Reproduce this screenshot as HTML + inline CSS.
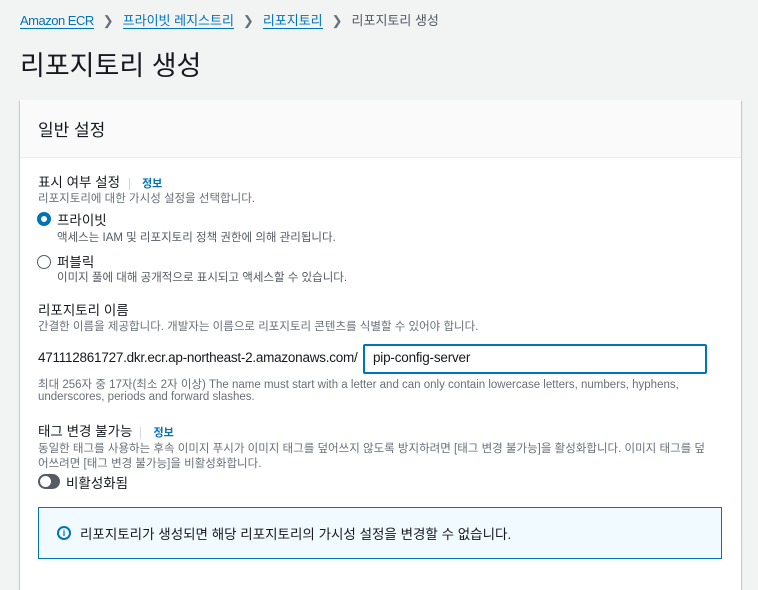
<!DOCTYPE html>
<html><head><meta charset="utf-8"><style>
*{margin:0;padding:0;box-sizing:border-box}
body{width:758px;height:578px;background:#f2f3f3;font-family:"Liberation Sans","Noto Sans CJK KR",sans-serif;color:#16191f;position:relative;overflow:hidden}
.a{position:absolute;white-space:nowrap}
.bc{font-size:13px;top:10px;left:20px;color:#545b64}
.bc a{color:#0073bb;text-decoration:none;border-bottom:1px solid #0073bb}
.sep{display:inline-block;margin:0 9px;color:#687078}
h1{position:absolute;left:20px;top:44px;font-size:27px;font-weight:400}
.card{position:absolute;left:20px;top:100px;width:721px;height:490px;background:#fff;box-shadow:0 1px 1px rgba(0,28,36,.3),1px 1px 1px rgba(0,28,36,.15),-1px 1px 1px rgba(0,28,36,.15)}
.hd{height:58px;background:#fafafa;border-bottom:1px solid #eaeded;padding:16px 18px;font-size:17px}
.lab{font-size:13.5px}
.d{font-size:11.5px;color:#687078}
.info{color:#0073bb;font-size:11px;font-weight:bold;border-left:1px solid #d5dbdb;padding-left:12px;margin-left:8px}
.radio{position:absolute;width:14px;height:14px;border-radius:50%}
</style></head><body>
<div class="a bc"><a style="letter-spacing:-0.5px">Amazon ECR</a><span class="sep">&#x276F;</span><a>프라이빗 레지스트리</a><span class="sep">&#x276F;</span><a>리포지토리</a><span class="sep">&#x276F;</span>리포지토리 생성</div>
<h1>리포지토리 생성</h1>
<div class="card"><div class="hd">일반 설정</div></div>
<div class="a lab" style="left:38px;top:171px">표시 여부 설정<span class="info" style="margin-left:9px">정보</span></div>
<div class="a d" style="left:38px;top:190px">리포지토리에 대한 가시성 설정을 선택합니다.</div>
<div class="radio" style="left:37px;top:212px;border:4px solid #0073bb"></div>
<div class="a lab" style="left:57px;top:209px">프라이빗</div>
<div class="a d" style="left:57px;top:229px;color:#545b64">액세스는 IAM 및 리포지토리 정책 권한에 의해 관리됩니다.</div>
<div class="radio" style="left:37px;top:255px;border:1.5px solid #545b64"></div>
<div class="a lab" style="left:57px;top:251px">퍼블릭</div>
<div class="a d" style="left:57px;top:269px;color:#545b64">이미지 풀에 대해 공개적으로 표시되고 액세스할 수 있습니다.</div>
<div class="a lab" style="left:38px;top:299px">리포지토리 이름</div>
<div class="a d" style="left:38px;top:318px">간결한 이름을 제공합니다. 개발자는 이름으로 리포지토리 콘텐츠를 식별할 수 있어야 합니다.</div>
<div class="a" style="left:38px;top:350px;font-size:13.5px;letter-spacing:-0.25px">471112861727.dkr.ecr.ap-northeast-2.amazonaws.com/</div>
<div class="a" style="left:363px;top:344px;width:344px;height:30px;border:2px solid #0073bb;border-radius:2px;padding:4px 8px;font-size:13.5px;letter-spacing:-0.2px">pip-config-server</div>
<div class="a d" style="left:38px;top:376px">최대 256자 중 17자(최소 2자 이상) The name must start with a letter and can only contain lowercase letters, numbers, hyphens,</div>
<div class="a d" style="left:38px;top:391px">underscores, periods and forward slashes.</div>
<div class="a lab" style="left:38px;top:420px">태그 변경 불가능<span class="info">정보</span></div>
<div class="a d" style="left:38px;top:440px">동일한 태그를 사용하는 후속 이미지 푸시가 이미지 태그를 덮어쓰지 않도록 방지하려면 [태그 변경 불가능]을 활성화합니다. 이미지 태그를 덮</div>
<div class="a d" style="left:38px;top:455px">어쓰려면 [태그 변경 불가능]을 비활성화합니다.</div>
<div class="a" style="left:38px;top:474px;width:22px;height:15px;border-radius:8px;background:#545b64"><div style="position:absolute;left:2px;top:2px;width:11px;height:11px;border-radius:50%;background:#fff"></div></div>
<div class="a lab" style="left:66px;top:472px">비활성화됨</div>
<div class="a" style="left:38px;top:507px;width:684px;height:52px;border:1px solid #0073bb;background:#f1faff"></div>
<div class="a" style="left:57px;top:526px;width:14px;height:14px;border-radius:50%;border:2px solid #0073bb;color:#0073bb;font-size:9px;font-weight:bold;text-align:center;line-height:10px">i</div>
<div class="a" style="left:80px;top:523px;font-size:13.5px">리포지토리가 생성되면 해당 리포지토리의 가시성 설정을 변경할 수 없습니다.</div>
</body></html>
